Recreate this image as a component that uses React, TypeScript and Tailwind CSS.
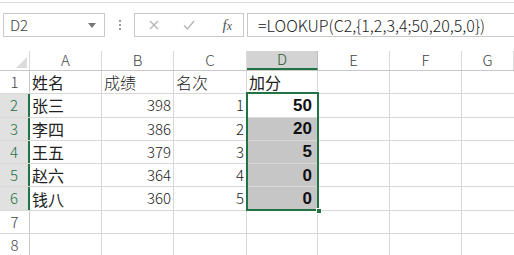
import React from "react";

type Row = { n: number; name: string; score: string; rank: string; bonus: string };

const rows: Row[] = [
  { n: 1, name: "姓名", score: "成绩", rank: "名次", bonus: "加分" },
  { n: 2, name: "张三", score: "398", rank: "1", bonus: "50" },
  { n: 3, name: "李四", score: "386", rank: "2", bonus: "20" },
  { n: 4, name: "王五", score: "379", rank: "3", bonus: "5" },
  { n: 5, name: "赵六", score: "364", rank: "4", bonus: "0" },
  { n: 6, name: "钱八", score: "360", rank: "5", bonus: "0" },
  { n: 7, name: "", score: "", rank: "", bonus: "" },
  { n: 8, name: "", score: "", rank: "", bonus: "" },
];

const cols = [
  { key: "A", w: "w-[72px]" },
  { key: "B", w: "w-[72px]" },
  { key: "C", w: "w-[73px]" },
  { key: "D", w: "w-[71px]" },
  { key: "E", w: "w-[72px]" },
  { key: "F", w: "w-[72px]" },
  { key: "G", w: "flex-1" },
];

const font = "font-['Noto_Sans_CJK_SC','Noto_Sans',sans-serif]";

export default function App() {
  return (
    <div className={`relative w-[514px] h-[255px] overflow-hidden bg-white ${font} text-[#222]`}>
      <div className="h-[3px] border-b border-[#dadada]" />

      {/* name box + formula bar */}
      <div className="mt-[10px] flex h-[24px] items-stretch">
        <div className="ml-[3px] flex w-[102px] items-center justify-between border border-[#c8c8c8] pl-[6px] pr-[8px]">
          <span className="text-[15px] font-light text-[#444]">D2</span>
          <svg width="8" height="5" viewBox="0 0 8 5">
            <path d="M0 0h8L4 5z" fill="#777" />
          </svg>
        </div>
        <div className="flex w-[29px] flex-col items-center justify-center gap-[2px]">
          <span className="h-[2px] w-[2px] bg-[#9a9a9a]" />
          <span className="h-[2px] w-[2px] bg-[#9a9a9a]" />
          <span className="h-[2px] w-[2px] bg-[#9a9a9a]" />
        </div>
        <div className="flex w-[110px] items-center border border-[#c8c8c8]">
          <svg className="ml-[14px]" width="10" height="10" viewBox="0 0 10 10">
            <path d="M1 1l8 8M9 1l-8 8" stroke="#b4b4b4" strokeWidth="1.3" />
          </svg>
          <svg className="ml-[24px]" width="12" height="10" viewBox="0 0 12 10">
            <path d="M1 5.5l3.5 3.5L11 1" stroke="#b4b4b4" strokeWidth="1.3" fill="none" />
          </svg>
          <span className="ml-auto mr-[11px] font-['Liberation_Serif',serif] text-[15px] italic text-[#555]">
            f<span className="text-[12px]">x</span>
          </span>
        </div>
        <div className="ml-[3px] flex flex-1 items-center border-y border-l border-[#c8c8c8] pl-[10px]">
          <span className="text-[16px] font-light text-[#222]">
            =LOOKUP(C2,{"{"}1,2,3,4;50,20,5,0{"}"})
          </span>
        </div>
      </div>

      {/* grid */}
      <div className="mt-[14px]">
        <div className="flex h-[20px] border-b border-[#c8c8c8]">
          <div className="flex w-[30px] items-end justify-end border-r border-[#dadada] pb-[2px] pr-[2px]">
            <svg width="11" height="11" viewBox="0 0 11 11">
              <path d="M11 0v11H0z" fill="#dcdcdc" />
            </svg>
          </div>
          {cols.map((c) => (
            <div
              key={c.key}
              className={`${c.w} flex items-center justify-center border-r text-[15px] font-light ${
                c.key === "D"
                  ? "border-[#bdbdbd] border-b-2 border-b-[#217346] bg-[#d3d3d3] text-[#1f5a3a]"
                  : "border-[#dadada] text-[#444]"
              }`}
            >
              {c.key}
            </div>
          ))}
        </div>

        {rows.map((r) => {
          const sel = r.n >= 2 && r.n <= 6;
          return (
            <div key={r.n} className="flex h-[23.3px] border-b border-[#d8d8d8]">
              <div
                className={`flex w-[30px] items-center justify-center text-[15px] font-light ${
                  sel
                    ? "border-r-2 border-[#217346] bg-[#e1e1e1] text-[#217346]"
                    : "border-r border-[#c8c8c8] text-[#444]"
                }`}
              >
                {r.n}
              </div>
              <div className="flex w-[72px] items-center border-r border-[#d8d8d8] pl-[2px] text-[16px]">
                {r.name}
              </div>
              <div
                className={`flex w-[72px] items-center border-r border-[#d8d8d8] font-light ${
                  r.n === 1 ? "justify-start pl-[2px] text-[16px]" : "justify-end pr-[2px] text-[15px]"
                }`}
              >
                {r.score}
              </div>
              <div
                className={`flex w-[73px] items-center border-r border-[#d8d8d8] font-light ${
                  r.n === 1 ? "justify-start pl-[2px] text-[16px]" : "justify-end pr-[2px] text-[15px]"
                }`}
              >
                {r.rank}
              </div>
              <div
                className={`flex w-[71px] items-center border-r border-[#d8d8d8] ${
                  r.n === 1
                    ? "justify-start pl-[2px] text-[16px]"
                    : "justify-end pr-[5px] font-['Liberation_Sans',sans-serif] text-[17px] font-bold text-[#111]"
                } ${r.n >= 3 && r.n <= 6 ? "bg-[#c6c6c6]" : ""}`}
              >
                {r.bonus}
              </div>
              <div className="w-[72px] border-r border-[#d8d8d8]" />
              <div className="w-[72px] border-r border-[#d8d8d8]" />
              <div className="flex-1" />
            </div>
          );
        })}
      </div>

      {/* selection outline over D2:D6 */}
      <div className="pointer-events-none absolute left-[246px] top-[92px] h-[119px] w-[73px] border-2 border-[#217346]" />
      <div className="pointer-events-none absolute left-[316px] top-[208px] h-[6px] w-[6px] border border-white bg-[#217346]" />
    </div>
  );
}
